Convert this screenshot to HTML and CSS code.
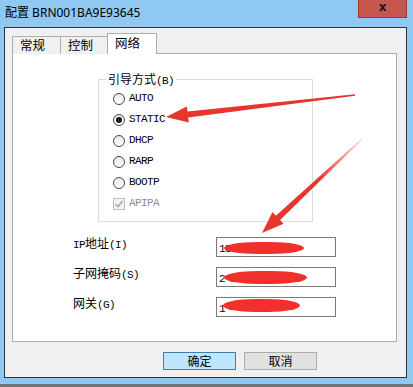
FILE: index.html
```html
<!DOCTYPE html>
<html lang="zh-CN">
<head>
  <meta charset="UTF-8">
  <title>配置 BRN001BA9E93645</title>
  <link rel="stylesheet" href="styles.css">
</head>
<body>
  <div class="window">
    <!-- 标题栏 -->
    <div class="titlebar">
      <span class="title">配置 BRN001BA9E93645</span>
      <div class="close">x</div>
    </div>

    <div class="dialog">
      <!-- 选项卡 -->
      <div class="tabs">
        <div class="tab tab-general">常规</div>
        <div class="tab tab-control">控制</div>
        <div class="tab tab-net active">网络</div>
      </div>

      <div class="panel">
        <!-- 引导方式 -->
        <fieldset class="boot">
          <legend>引导方式<span class="lat">(B)</span></legend>
          <div class="opt"><span class="radio"></span><span class="lat">AUTO</span></div>
          <div class="opt"><span class="radio checked"></span><span class="lat">STATIC</span></div>
          <div class="opt"><span class="radio"></span><span class="lat">DHCP</span></div>
          <div class="opt"><span class="radio"></span><span class="lat">RARP</span></div>
          <div class="opt"><span class="radio"></span><span class="lat">BOOTP</span></div>
          <div class="opt disabled">
            <span class="check">
              <svg width="10" height="10" viewBox="0 0 10 10"><path d="M1.5 5.2 L4 7.6 L8.6 2" fill="none" stroke="#a8a8a8" stroke-width="1.6"/></svg>
            </span><span class="lat">APIPA</span>
          </div>
        </fieldset>

        <!-- 地址设置 -->
        <div class="fields">
          <div class="field">
            <div class="label"><span class="lat">IP</span>地址<span class="lat">(I)</span></div>
            <div class="box"><span class="lat">15</span><span class="mask mask-ip"></span></div>
          </div>
          <div class="field">
            <div class="label">子网掩码<span class="lat">(S)</span></div>
            <div class="box"><span class="lat">2</span><span class="mask mask-sub"></span></div>
          </div>
          <div class="field">
            <div class="label">网关<span class="lat">(G)</span></div>
            <div class="box"><span class="lat">1</span><span class="mask mask-gw"></span></div>
          </div>
        </div>
      </div>

      <!-- 按钮 -->
      <div class="buttons">
        <button class="btn primary">确定</button>
        <button class="btn">取消</button>
      </div>
    </div>
    <div class="bottom-edge"></div>

    <!-- 标注箭头 -->
    <svg class="arrows" width="413" height="387" viewBox="0 0 413 387">
      <defs>
        <linearGradient id="fade" gradientUnits="userSpaceOnUse" x1="362" y1="139" x2="320" y2="180">
          <stop offset="0" stop-color="#e8352e" stop-opacity="0.15"/>
          <stop offset="1" stop-color="#e8352e" stop-opacity="1"/>
        </linearGradient>
      </defs>
      <polygon fill="#e8352e" points="166,117 186.9,106.5 187.5,111.5 354.9,94.2 355.1,95.8 188.2,117.4 188.8,122.4"/>
      <polygon fill="url(#fade)" points="262,233 272.5,212.1 275.9,215.7 361.5,138.4 362.5,139.6 280.1,220.1 283.5,223.7"/>
    </svg>
  </div>
</body>
</html>
```

FILE: styles.css
```css
/* 基本 */
* { margin: 0; padding: 0; box-sizing: border-box; }
body {
  font-family: "Noto Sans CJK SC", sans-serif;
  font-size: 12px;
  color: #000;
  background: #8ec8f3;
}
.lat {
  font-family: "Liberation Mono", monospace;
  font-size: 11px;
  letter-spacing: -0.6px;
  line-height: 1;
}
/* 窗口外框 */
.window {
  position: relative;
  width: 413px;
  height: 387px;
  overflow: hidden;
  background: #8ec8f3;
}
.titlebar {
  height: 27px;
  display: flex;
  align-items: center;
  justify-content: space-between;
  padding-left: 5px;
}
.title {
  font-family: "Noto Sans", "Noto Sans CJK SC", sans-serif;
  font-size: 12px;
  line-height: 14px;
  margin-top: -2px;
}
.close {
  align-self: flex-start;
  width: 49px;
  height: 18px;
  margin-right: 6px;
  background: #c7564e;
  border: 1px solid #9c3a33;
  border-top: none;
  color: #1a1a1a;
  font-family: "DejaVu Sans", sans-serif;
  font-weight: bold;
  font-size: 12px;
  line-height: 15px;
  text-align: center;
}
/* 对话框主体 */
.dialog {
  margin-left: 4px;
  width: 403px;
  height: 351px;
  border: 1px solid #2d3640;
  background: #f0f0f0;
  padding: 5px 0 0 7px;
}
.tabs {
  display: flex;
  align-items: flex-end;
  height: 21px;
  margin-bottom: -1px;
  position: relative;
  z-index: 1;
}
.tab {
  height: 18px;
  border: 1px solid #adadad;
  border-bottom: none;
  border-right: none;
  background: #f0f0f0;
  padding-left: 7px;
  line-height: 16px;
  font-size: 12.5px;
}
.tab-general { width: 48px; }
.tab-control { width: 47px; }
.tab-net { width: 50px; border-right: 1px solid #adadad; }
.tab.active {
  height: 21px;
  background: #fff;
  line-height: 18px;
}
.panel {
  width: 385px;
  height: 289px;
  border: 1px solid #adadad;
  background: #fff;
}
/* 引导方式 */
.boot {
  margin: 18px 0 0 85px;
  width: 215px;
  height: 150px;
  border: 1px solid #dcdcdc;
  padding: 1px 0 0 0;
}
.boot legend {
  margin-left: 7px;
  padding: 0 2px;
  line-height: 14px;
}
.opt {
  height: 21px;
  display: flex;
  align-items: center;
  gap: 4px;
  padding-left: 14px;
}
.radio {
  width: 12px;
  height: 12px;
  border: 1px solid #4a4a4a;
  border-radius: 50%;
  background: linear-gradient(#e8e8e8, #fff);
  display: flex;
  align-items: center;
  justify-content: center;
}
.radio.checked::after {
  content: "";
  width: 6px;
  height: 6px;
  border-radius: 50%;
  background: #1a1a1a;
}
.check {
  width: 12px;
  height: 12px;
  border: 1px solid #bcbcbc;
  background: #f4f4f4;
  display: flex;
  align-items: center;
  justify-content: center;
}
.disabled { color: #8d8d8d; }
/* 地址 */
.fields {
  margin: 15px 0 0 60px;
  display: flex;
  flex-direction: column;
  gap: 10px;
}
.field {
  display: flex;
  align-items: flex-start;
}
.label {
  width: 143px;
  height: 14px;
  line-height: 14px;
  margin-top: -1px;
}
.box {
  position: relative;
  width: 120px;
  height: 20px;
  border: 1px solid #7a7a7a;
  background: #fff;
  padding-left: 2px;
  line-height: 18px;
}
.mask {
  position: absolute;
  height: 12px;
  background: #f2302b;
  border-radius: 50% / 60%;
  filter: blur(0.6px);
}
.mask-ip { left: 7px; top: 4px; width: 80px; }
.mask-sub { left: 7px; top: 3px; width: 83px; height: 13px; }
.mask-gw { left: 6px; top: 1px; width: 77px; height: 13px; }
/* 按钮 */
.buttons {
  display: flex;
  gap: 8px;
  margin: 10px 0 0 151px;
}
.btn {
  width: 73px;
  height: 18px;
  border: 1px solid #adadad;
  background: #e1e1e1;
  font-family: "Noto Sans CJK SC", sans-serif;
  font-size: 12px;
  line-height: 14px;
  color: #000;
}
.btn.primary {
  background: #bee6fd;
  border-color: #3c7fb1;
}
.bottom-edge {
  height: 3px;
  margin-top: 6px;
  background: #6f7378;
}
/* 箭头覆盖层 */
.arrows {
  position: absolute;
  top: 0;
  left: 0;
  pointer-events: none;
}
```
